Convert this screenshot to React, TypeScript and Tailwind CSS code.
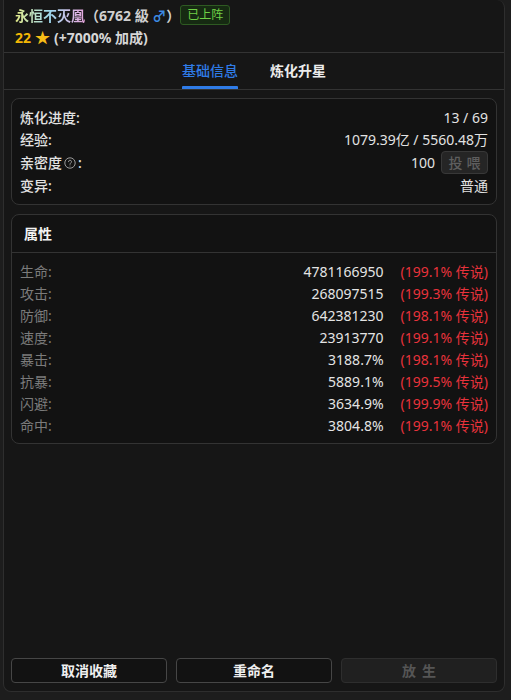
import React from 'react';

const stats = [
  { label: '生命', value: '4781166950', pct: '(199.1% 传说)' },
  { label: '攻击', value: '268097515', pct: '(199.3% 传说)' },
  { label: '防御', value: '642381230', pct: '(198.1% 传说)' },
  { label: '速度', value: '23913770', pct: '(199.1% 传说)' },
  { label: '暴击', value: '3188.7%', pct: '(198.1% 传说)' },
  { label: '抗暴', value: '5889.1%', pct: '(199.5% 传说)' },
  { label: '闪避', value: '3634.9%', pct: '(199.9% 传说)' },
  { label: '命中', value: '3804.8%', pct: '(199.1% 传说)' },
];

const HelpIcon = () => (
  <svg viewBox="0 0 12 12" className="w-[12px] h-[12px] mx-[2px]" fill="none" stroke="#9a9a9a" strokeWidth="1">
    <circle cx="6" cy="6" r="5.2" />
    <path d="M4.5 4.7a1.5 1.5 0 1 1 2.1 1.4c-.4.2-.6.5-.6.9v.3" strokeLinecap="round" />
    <circle cx="6" cy="8.9" r="0.5" fill="#9a9a9a" stroke="none" />
  </svg>
);

const App: React.FC = () => {
  return (
    <div
      className="w-full h-[700px] bg-[#1d1d1d] pl-[3px] pr-[6px] text-[14px] text-[#e2e2e2]"
      style={{ fontFamily: '"Noto Sans", "Noto Sans CJK SC", sans-serif' }}
    >
      <div className="h-[692px] flex flex-col bg-[#161616] border border-[#2e2e2e] border-t-0 rounded-b-[8px] rounded-tr-[8px]">
        {/* header */}
        <div className="px-[11px] pt-[4px] pb-[4px] border-b border-[#333]">
          <div className="flex items-center h-[22px] font-bold">
            <span className="bg-gradient-to-r from-[#e3ea86] via-[#9ed8ef] to-[#e7a6de] bg-clip-text text-transparent">永恒不灭凰</span>
            <span className="text-[#cfcfcf]">（6762 級 <span className="text-[#3d8be6]">♂</span>）</span>
            <span className="h-[20px] px-[6px] flex items-center text-[12px] font-normal text-[#6fd046] bg-[#162a12] border border-[#2e5a22] rounded-[3px]">已上阵</span>
          </div>
          <div className="flex items-center h-[22px] font-bold">
            <span className="text-[#f2b705]">22</span>
            <span className="text-[#f6bd16] mx-[4px] text-[15px] leading-none">★</span>
            <span className="text-[#d6d6d6]">(+7000% 加成)</span>
          </div>
        </div>

        {/* tabs */}
        <div className="flex justify-center gap-[32px] h-[37px] border-b border-[#333]">
          <div className="flex flex-col justify-between w-[56px]">
            <span className="pt-[7px] text-[#2f7be6] font-medium text-center">基础信息</span>
            <div className="h-[3px] bg-[#2f7be6] rounded-t-[1px]" />
          </div>
          <div className="flex flex-col w-[56px]">
            <span className="pt-[7px] text-[#ececec] font-bold text-center">炼化升星</span>
          </div>
        </div>

        {/* basic info card */}
        <div className="mx-[7px] mt-[8px] bg-[#121212] border border-[#333] rounded-[8px] px-[8px] pt-[7px] pb-[8px]">
          <div className="flex items-center justify-between h-[22px]">
            <span className="font-medium">炼化进度:</span>
            <span>13 / 69</span>
          </div>
          <div className="flex items-center justify-between h-[23px]">
            <span className="font-medium">经验:</span>
            <span>1079.39亿 / 5560.48万</span>
          </div>
          <div className="flex items-center justify-between h-[23px]">
            <span className="font-medium flex items-center">亲密度<HelpIcon />:</span>
            <div className="flex items-center gap-[6px]">
              <span>100</span>
              <button className="h-[23px] w-[47px] bg-[#252525] border border-[#383838] rounded-[4px] text-[#5e5e5e] tracking-[4px] pl-[4px] font-medium">投喂</button>
            </div>
          </div>
          <div className="flex items-center justify-between h-[22px]">
            <span className="font-medium">变异:</span>
            <span>普通</span>
          </div>
        </div>

        {/* stats card */}
        <div className="mx-[7px] mt-[9px] bg-[#121212] border border-[#333] rounded-[8px]">
          <div className="h-[38px] flex items-center px-[12px] border-b border-[#333] font-bold text-[#f2f2f2]">属性</div>
          <div className="px-[8px] pt-[7px] pb-[7px]">
            {stats.map((s) => (
              <div key={s.label} className="flex items-center h-[22px]">
                <span className="flex-1 text-[#7b7b7b]">{s.label}:</span>
                <span className="text-[#e4e4e4]">{s.value}</span>
                <span className="shrink-0 whitespace-nowrap ml-[17px] text-right text-[#e8323c]">{s.pct}</span>
              </div>
            ))}
          </div>
        </div>

        {/* actions */}
        <div className="mt-auto mx-[7px] mb-[8px] grid grid-cols-3 gap-[9px]">
          <button className="h-[25px] bg-[#121212] border border-[#464646] rounded-[4px] font-bold text-[#efefef]">取消收藏</button>
          <button className="h-[25px] bg-[#121212] border border-[#464646] rounded-[4px] font-bold text-[#efefef]">重命名</button>
          <button className="h-[25px] bg-[#202020] border border-[#2e2e2e] rounded-[4px] font-bold text-[#555] tracking-[6px] pl-[6px]">放生</button>
        </div>
      </div>
    </div>
  );
};

export default App;
